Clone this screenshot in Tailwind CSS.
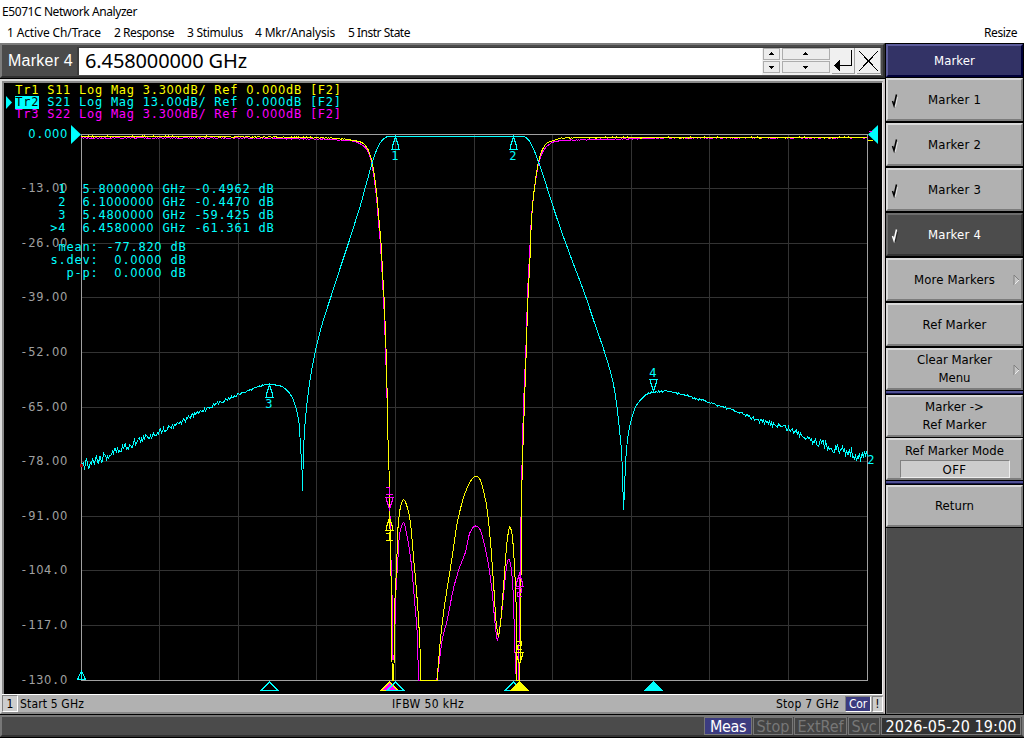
<!DOCTYPE html>
<html lang="en">
<head>
<meta charset="utf-8">
<title>E5071C Network Analyzer</title>
<script src="https://cdn.jsdelivr.net/npm/@tailwindcss/browser@4"></script>
</head>
<body class="w-[1024px] h-[738px] overflow-hidden bg-black text-black font-['DejaVu_Sans_Condensed','DejaVu_Sans',sans-serif] text-[13px]">
<div class="flex flex-col h-[738px]">
  <header class="h-[43px] shrink-0 bg-white font-['Noto_Sans',sans-serif] text-[12px] whitespace-nowrap">
    <div class="h-[24px] pl-[2px] leading-[23px]"><span data-w="134">E5071C Network Analyzer</span></div>
    <nav class="h-[19px] flex leading-[18px] pl-[7px] pr-[7px]">
      <span class="w-[107px]"><span data-w="93">1 Active Ch/Trace</span></span>
      <span class="w-[73px]"><span data-w="59">2 Response</span></span>
      <span class="w-[68px]"><span data-w="55">3 Stimulus</span></span>
      <span class="w-[93px]"><span data-w="79">4 Mkr/Analysis</span></span>
      <span><span data-w="61">5 Instr State</span></span>
      <span class="ml-auto"><span data-w="32">Resize</span></span>
    </nav>
  </header>

  <div class="flex h-[671px] shrink-0">
    <main class="w-[885px] shrink-0 flex flex-col">
      <div class="h-[35px] bg-[#4b4b4b] border-t-2 border-l-2 border-[#7c7c7c] border-b-2 border-b-[#303030] border-r-2 border-r-[#303030] flex items-center whitespace-nowrap">
        <div class="w-[75px] shrink-0 pl-[6px] text-white text-[16px] font-['Liberation_Sans',sans-serif]"><span data-w="64">Marker 4</span></div>
        <div class="flex-1 mr-[2px] h-[28px] bg-white border-t border-l-2 border-[#3c3c3c] flex items-center pl-[6px] text-[20px] font-['Noto_Sans',sans-serif]"><span data-w="161">6.458000000 GHz</span>
          <div class="ml-auto flex gap-[2px] h-full bg-[#f0f0f0] pl-px">
            <svg width="17" height="26" shape-rendering="crispEdges"><path d="M.5 .5h16v11h-16zM.5 13.500h16v11h-16z" fill="#ececec" stroke="#adadad"/><path d="M6 7h5l-2.500-3zM6 18h5l-2.500 3z"/></svg>
            <svg width="48" height="26" shape-rendering="crispEdges"><path d="M.5 .5h47v11h-47zM.5 13.500h47v11h-47z" fill="#ececec" stroke="#adadad"/><path d="M21 7h5l-2.500-3zM21 18h5l-2.500 3z"/></svg>
            <svg width="23" height="26" shape-rendering="crispEdges"><path d="M22.500 0v25H0" fill="none" stroke="#a0a0a0"/><path d="M19.500 2v15.500H6" fill="none" stroke="#000"/><path d="M2 17.500l6-6v12z"/></svg>
            <svg width="24" height="26" shape-rendering="crispEdges"><path d="M23.500 0v25H0" fill="none" stroke="#a0a0a0"/><path d="M2 3l19 20M21 3L2 23" fill="none" stroke="#000"/></svg>
          </div>
        </div>
      </div>
      <div class="h-px bg-black"></div>
      <div class="h-[635px] flex flex-col border-t-2 border-l-2 border-[#dcdcdc] border-b-2 border-b-[#888] border-r-2 border-r-[#cfc8c8]">
        <div class="h-[613px] border-t-2 border-l-2 border-[#8a8a8a] border-r border-r-[#eee] bg-black">
          <svg id="plot" width="878" height="610" viewBox="4 83 878 610" class="block" fill="none"></svg>
        </div>
        <div class="h-[18px] bg-[#b1b1b1] border-t border-white flex items-center text-[12px] whitespace-nowrap">
          <div class="w-[16px] h-[17px] leading-[16px] text-center border border-t-[#808080] border-l-[#808080] border-white bg-[#cdcdcd]">1</div>
          <div class="w-[374px] pl-[2px]"><span data-w="63">Start 5 GHz</span></div>
          <div><span data-w="71">IFBW 50 kHz</span></div>
          <div class="ml-auto mr-[6px]"><span data-w="62">Stop 7 GHz</span></div>
          <div class="w-[26px] h-[16px] leading-[15px] text-center bg-[#3c3c80] text-white border border-[#808080] border-b-white border-r-white"><span data-w="17">Cor</span></div>
          <div class="w-[11px] ml-px h-[16px] leading-[15px] text-center bg-[#cdcdcd] border border-t-[#808080] border-l-[#808080] border-white">!</div>
        </div>
      </div>
    </main>

    <aside class="w-[138px] ml-px flex flex-col text-center leading-[18px] whitespace-nowrap pt-px pr-px">
      <div class="h-[33px] shrink-0 bg-[#333366] border-2 border-t-[#5c5c9c] border-l-[#5c5c9c] border-[#000038] text-white flex items-center justify-center"><span data-w="40">Marker</span></div>
      <div class="shrink-0 pt-px flex flex-col">
        <button class="relative shrink-0 h-[43px] mb-[2px] bg-[#b1b1b1] border-2 border-t-[#dadada] border-l-[#dadada] border-[#7c7c7c]"><svg class="absolute left-[2px] top-[13px]" width="11" height="16" fill="none"><path d="M4 9.500L5.500 13.500L7.500 4" stroke="#e6e6e6"/><path d="M2.500 8L4 12.500L6.500 1.500" stroke="#000" stroke-width="1.500"/></svg><span data-w="52">Marker 1</span></button>
        <button class="relative shrink-0 h-[43px] mb-[2px] bg-[#b1b1b1] border-2 border-t-[#dadada] border-l-[#dadada] border-[#7c7c7c]"><svg class="absolute left-[2px] top-[13px]" width="11" height="16" fill="none"><path d="M4 9.500L5.500 13.500L7.500 4" stroke="#e6e6e6"/><path d="M2.500 8L4 12.500L6.500 1.500" stroke="#000" stroke-width="1.500"/></svg><span data-w="52">Marker 2</span></button>
        <button class="relative shrink-0 h-[43px] mb-[2px] bg-[#b1b1b1] border-2 border-t-[#dadada] border-l-[#dadada] border-[#7c7c7c]"><svg class="absolute left-[2px] top-[13px]" width="11" height="16" fill="none"><path d="M4 9.500L5.500 13.500L7.500 4" stroke="#e6e6e6"/><path d="M2.500 8L4 12.500L6.500 1.500" stroke="#000" stroke-width="1.500"/></svg><span data-w="52">Marker 3</span></button>
        <button class="relative shrink-0 h-[43px] mb-[2px] bg-[#4c4c4c] text-white border-2 border-t-[#6c6c6c] border-l-[#6c6c6c] border-[#333]"><svg class="absolute left-[2px] top-[13px]" width="11" height="16" fill="none"><path d="M4 9.500L5.500 13.500L7.500 4" stroke="#222"/><path d="M2.500 8L4 12.500L6.500 1.500" stroke="#fff" stroke-width="1.500"/></svg><span data-w="52">Marker 4</span></button>
        <button class="relative shrink-0 h-[43px] mb-[2px] bg-[#b1b1b1] border-2 border-t-[#dadada] border-l-[#dadada] border-[#7c7c7c]"><span data-w="80">More Markers</span><svg class="absolute right-0 top-[14px]" width="8" height="12"><path d="M1 1v10l5-5z" fill="#c4c4c4"/><path d="M1 11l5-5" stroke="#eee"/><path d="M6 6L1 1v10" fill="none" stroke="#808080"/></svg></button>
        <button class="shrink-0 h-[43px] mb-[2px] bg-[#b1b1b1] border-2 border-t-[#dadada] border-l-[#dadada] border-[#7c7c7c]"><span data-w="63">Ref Marker</span></button>
        <button class="relative shrink-0 h-[42px] mb-px bg-[#b1b1b1] border-2 border-t-[#dadada] border-l-[#dadada] border-[#7c7c7c]"><span data-w="74">Clear Marker</span><br><span data-w="31">Menu</span><svg class="absolute right-0 top-[14px]" width="8" height="12"><path d="M1 1v10l5-5z" fill="#c4c4c4"/><path d="M1 11l5-5" stroke="#eee"/><path d="M6 6L1 1v10" fill="none" stroke="#808080"/></svg></button>
        <div class="shrink-0 h-[3px] bg-[#505094] border-b border-[#111144] mb-px"></div>
        <button class="shrink-0 h-[42px] mb-px bg-[#b1b1b1] border-2 border-t-[#dadada] border-l-[#dadada] border-[#7c7c7c]"><span data-w="58">Marker -&gt;</span><br><span data-w="63">Ref Marker</span></button>
        <button class="shrink-0 h-[42px] mb-px bg-[#b1b1b1] border-2 border-t-[#dadada] border-l-[#dadada] border-[#7c7c7c] flex flex-col items-center pt-[2px]"><span data-w="98">Ref Marker Mode</span><span class="w-[110px] h-[18px] shrink-0 leading-[17px] bg-[#cccccc] border border-t-[#808080] border-l-[#808080] border-[#eee]"><span data-w="23">OFF</span></span></button>
        <div class="shrink-0 h-[3px] bg-[#505094] border-b border-[#111144] mb-px"></div>
        <button class="shrink-0 h-[42px] bg-[#b1b1b1] border-2 border-t-[#dadada] border-l-[#dadada] border-[#7c7c7c]"><span data-w="38">Return</span></button>
      </div>
      <div class="flex-1 mt-px bg-[#4c4c4c] border-b border-l border-[#777]"></div>
    </aside>
  </div>

  <footer class="mt-px h-[22px] shrink-0 bg-[#4b4b4b] border-2 border-[#777] border-b-[#333] flex items-center justify-end gap-px pr-px text-[16px] leading-[18px] text-center text-[#777] whitespace-nowrap">
    <div class="w-[48px] h-[18px] border border-[#777] bg-[#3c3c80] text-white"><span data-w="35">Meas</span></div>
    <div class="w-[40px] h-[18px] border border-[#777] bg-[#444]"><span data-w="32">Stop</span></div>
    <div class="w-[53px] h-[18px] border border-[#777] bg-[#444]"><span data-w="45">ExtRef</span></div>
    <div class="w-[32px] h-[18px] border border-[#777] bg-[#444]"><span data-w="24">Svc</span></div>
    <div class="w-[140px] h-[18px] border border-[#777] bg-[#333] text-white"><span data-w="130">2026-05-20 19:00</span></div>
  </footer>
</div>
<script>
// Fit each label to its design width by spreading the difference over its letters.
function fit() {
  document.querySelectorAll('[data-w]').forEach(e => {
    e.style.display = 'inline-block';
    e.style.whiteSpace = 'nowrap';
    e.style.letterSpacing = '0px';
    const w = e.getBoundingClientRect().width, d = (+e.dataset.w + 1 - w) / e.textContent.length;
    e.style.letterSpacing = d + 'px';
  });
}
fit();
addEventListener('load', () => { fit(); requestAnimationFrame(fit); setTimeout(fit, 60); });
document.fonts.ready.then(fit);

const C = '#00ffff', Y = '#ffff00', M = '#ff00ff', G = '#a0a0a0';
const xs = [81,159,238,316,395,474,552,631,709,788,867];
const ys = [134,188,243,297,352,407,461,516,570,625,680];
let out = '';
const line = (d, c, f) => out += `<path d="${d}" stroke="${c}" fill="${f || 'none'}" shape-rendering="crispEdges"/>`;
// Monospaced text: one cell per character, x is the left edge of the first cell.
function mono(s, x, y, c, cell = 7.92) {
  const pos = [...s].map((_, i) => (x + cell * (i + .5)).toFixed(2)).join(' ');
  const body = s.replace(/&/g, '&amp;').replace(/</g, '&lt;').replace(/0/g, '<tspan font-family="DejaVu Sans" font-size="11.5">0</tspan>');
  out += `<text xml:space="preserve" x="${pos}" y="${y}" fill="${c}" text-anchor="middle" font-family="DejaVu Sans Mono" font-size="12">${body}</text>`;
}
xs.slice(1, 10).forEach(x => line(`M${x}.5 135V680`, '#333'));
ys.slice(1, 10).forEach(y => line(`M82 ${y}.5H867`, '#333'));
line('M81.500 134.500H867.500V680.500H81.500Z', G);

['-13.00','-26.00','-39.00','-52.00','-65.00','-78.00','-91.00','-104.0','-117.0','-130.0'].forEach((s, i) => mono(s, 20, ys[i + 1] + 4, G));
mono('0.000', 28, 138, C);

let seed = 7;
const rnd = () => (seed = (seed * 16807) % 2147483647) / 2147483647 - .5;
// Monotone cubic through the points, sampled about once per pixel, plus noise of size amp(x).
function trace(p, c, amp) {
  const s = p.slice(1).map((q, i) => (q[1] - p[i][1]) / (q[0] - p[i][0]));
  const m = p.map((_, i) => i === 0 ? s[0] : i === p.length - 1 ? s[i - 1] : s[i - 1] * s[i] <= 0 ? 0 : 2 * s[i - 1] * s[i] / (s[i - 1] + s[i]));
  let d = 'M' + (p[0][0] + .5) + ' ' + p[0][1];
  for (let i = 1; i < p.length; i++) {
    const [a, b] = p[i - 1], [x, y] = p[i], h = x - a, n = Math.max(1, Math.round(h));
    for (let k = 1; k <= n; k++) {
      const t = k / n, u = 1 - t;
      const v = b * (1 + 2 * t) * u * u + y * t * t * (3 - 2 * t) + h * (m[i - 1] * t * u * u - m[i] * t * t * u);
      d += 'L' + (a + h * t + .5).toFixed(1) + ' ' + (v + rnd() * amp(a + h * t)).toFixed(1);
    }
  }
  line(d, c);
}
const flat = x => (x < 350 || x > 560) ? 1 : 0;
trace([[81,138],[235,138],[330,139.500],[352,141],[360,144],[366,149],[370,158],[373,174],[376,197],[378,222],[380,245],[382,282],[383.500,309],[384.500,335],[385.500,365],[386.500,398],[387.500,440],[388.500,470],[389.500,515],[390,545],[391.500,593],[392.500,660],[394,650],[395,600],[396.700,570],[399.300,533],[403,522.500],[406.700,537],[410.700,563],[414,600],[416.700,633],[418.300,680],[436,680],[439,660],[441.700,640],[446.700,620],[453.300,587],[460,565],[465,552],[469.300,533],[475,526],[479.300,529],[483.300,542],[488.300,567],[491.700,593],[495,628],[496.700,640],[500,623],[503.300,592],[506.700,563],[508.300,559],[510.700,568],[512.700,593],[514.300,647],[516,680],[518,680],[519,610],[520,545],[521,490],[522,440],[524,380],[525.500,345],[527,295],[529.500,245],[530.500,225],[532,205],[535,182],[537.700,165],[541.700,153],[546.700,146],[553,142],[563,140.500],[620,139],[670,138],[867,137.700]], M, flat);
trace([[81,136.500],[160,136.500],[270,137],[330,138],[350,140],[360,142],[366,147],[370,156],[373,170],[376,192],[378.500,220],[380.500,243],[382.500,280],[384,307],[385,333],[386,363],[386.700,397],[387.500,440],[388.500,470],[389.300,520],[390.300,560],[391,613],[391.700,680],[393.300,680],[394.300,603],[396,570],[397.300,530],[400,507],[403,499.500],[406.700,507],[410,523],[413,557],[416.700,600],[420,660],[420.300,680],[436.700,680],[437.500,668],[441.700,623],[446.700,588],[451.700,557],[456.700,523],[465,492],[471.700,479],[475.700,476],[479.300,479],[483.300,492],[486.700,510],[490,542],[493.300,587],[495.700,623],[498,637],[500.300,620],[503.300,583],[506.700,540],[509.300,527],[511.700,535],[514,567],[516,617],[516.500,680],[519.300,680],[520,620],[520.700,560],[521,500],[522,460],[522.700,440],[524.300,393],[525.700,353],[527.300,303],[530,247],[530.500,230],[532.300,203],[535,180],[537.700,163],[541.700,150],[546.700,143],[553,140.500],[563,138],[600,137.500],[867,137.500]], Y, flat);
trace([[81,465],[100,458],[120,449],[140,440],[160,431],[180,422],[203,410],[227,399],[247,391],[260,386],[269,384.500],[280,386],[287,391],[292,398],[296,410],[299,427],[300,447],[301.500,470],[302,491],[302.500,470],[303.500,440],[306,408],[310,377],[316,346],[322,323],[331,295],[340,267],[349,240],[355,221],[360,205],[366,183],[372,162],[377,148],[382,140],[388,136.500],[523,136.500],[528,140],[533,149],[538,162],[547,189],[554,211],[563,237],[573,264],[585,296],[593,320],[604,352],[612,380],[616,403],[619,430],[621,450],[622,472],[623,510],[624,490],[625,463],[627,440],[630,423],[635,407],[640,400],[647,394],[653,392],[667,391.500],[680,394],[700,400],[720,406],[740,413],[760,421],[780,426],[800,434],[820,443],[840,450],[867,457]], C,
  x => x < 165 ? 13 - (x - 81) * .09 : x < 265 ? 5.500 - (x - 165) * .045 : x < 645 ? 0 : x < 740 ? 2 : 2.500 + (x - 740) * .085);
out += '<rect x="80" y="464" width="3" height="3" fill="#a00000"/>';

const up = (x, y, c) => line(`M${x - 4} ${y + 12}.5H${x + 5}M${x - 3}.5 ${y + 12}V${y + 9}L${x}.5 ${y}L${x + 3}.5 ${y + 9}V${y + 12}`, c);
const down = (x, y, c) => line(`M${x - 4} ${y - 12}.5H${x + 5}M${x - 3}.5 ${y - 12}V${y - 9}L${x}.5 ${y}L${x + 3}.5 ${y - 9}V${y - 12}`, c);
up(395, 137, C); mono('1', 391, 160, C);
up(513, 137, C); mono('2', 509, 160, C);
up(269, 385, C); mono('3', 265, 408, C);
down(653, 391, C); mono('4', 649, 377, C);
mono('2', 867, 464, C);
down(389, 509, M); line('M386 494.500H393M389.500 487V494M386 487.500H390', M);
up(389, 518, Y); line('M386 540.500H393M389.500 532V540M386 533.500H390', Y);
up(519, 574, M); line('M516 588.500h5v4h-4v4h5', M);
down(519, 664, Y); line('M516 641.500h5v4h-4v4h5', Y);
line('M81.500 671L77.500 679.500H85.500ZM81.500 671V679', C);

const tri = (x, c, f) => line(`M${x}.5 682L${x - 8} 690.500H${x + 9}Z`, c, f);
tri(269, C); tri(389, Y, M); tri(395, C); tri(513, C); tri(519, Y, Y); tri(653, C, C);
out += '<path d="M71 125V144L81 134.500ZM878 125V144L868 134.500Z" fill="#00ffff"/>';
line('M868 140.500h5', Y); line('M869 131.500h3', M);

mono('Tr1 S11 Log Mag 3.300dB/ Ref 0.000dB [F2]', 15, 94, Y, 7.96);
out += '<rect x="15" y="96" width="24" height="13" fill="#00ffff"/><path d="M6 96V109L12 102.500Z" fill="#00ffff"/>';
mono('Tr2', 15, 106, '#000', 7.96);
mono('S21 Log Mag 13.00dB/ Ref 0.000dB [F2]', 46.84, 106, C, 7.96);
mono('Tr3 S22 Log Mag 3.300dB/ Ref 0.000dB [F2]', 15, 118, M, 7.96);

[[' 1','5.8000000 GHz -0.4962 dB'],[' 2','6.1000000 GHz -0.4470 dB'],[' 3','5.4800000 GHz -59.425 dB'],['>4','6.4580000 GHz -61.361 dB']].forEach((r, i) => {
  mono(r[0], 50, 193 + i * 13, C); mono(r[1], 82, 193 + i * 13, C, 8);
});
mono(' mean: -77.820 dB', 50, 251, C, 8);
mono('s.dev:  0.0000 dB', 50, 264, C, 8);
mono('  p-p:  0.0000 dB', 50, 277, C, 8);
document.getElementById('plot').innerHTML = out;
</script>
</body>
</html>
